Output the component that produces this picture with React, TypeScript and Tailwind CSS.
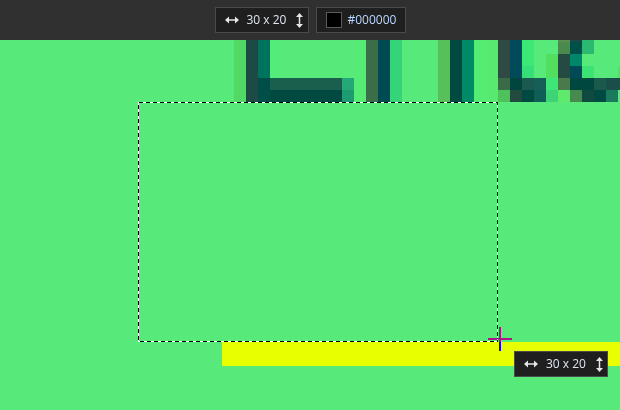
import React from "react";

const G = "#57e97a";

type Col = [number, string[]];
const cols: Col[] = [
  [234, Array(6).fill("#52d964")],
  [246, Array(6).fill("#1e4a46")],
  [258, ["#00735e", "#00735e", "#00735e", "#00735e", "#004e48", "#004e48"]],
  [270, ["#55eb78", "#55eb78", "#55eb78", "#55eb78", "#1a5e4e", "#004a42"]],
  ...[282, 294, 306, 318, 330].map((x) => [x, [G, G, G, G, "#1a5e4e", "#004a42"]] as Col),
  [342, [G, G, G, G, "#25a878", "#1c9c70"]],
  [354, Array(6).fill("#55eb74")],
  [366, Array(6).fill("#3b6e48")],
  [378, Array(6).fill("#004a52")],
  [390, Array(6).fill("#36d478")],
  [438, Array(6).fill("#57c05a")],
  [450, Array(6).fill("#004a42")],
  [462, Array(6).fill("#008a66")],
  [474, Array(6).fill("#55ec74")],
  [486, Array(6).fill("#58ea70")],
  [498, ["#2f4a42", "#2f4a42", "#2f4a42", "#2f4a42", "#3a6a46", "#4fc15a"]],
  [510, ["#004a5a", "#004a5a", "#004a5a", "#004a5a", "#00463f", "#224a3e"]],
  [522, ["#3be876", "#3be876", "#3be876", "#36de78", "#1a5a50", "#004a42"]],
  [534, [G, G, G, G, "#165e58", "#0e5e57"]],
  [546, [G, G, "#52df60", "#52df60", "#3de676", "#3dd478"]],
  [558, ["#5a9050", "#4a8a4c", "#254a42", "#254a42", "#4a7a4c", "#5eea6c"]],
  [570, ["#1a4a48", "#00504a", "#00876a", "#004a58", "#00483f", "#468a4e"]],
  [582, ["#2bb870", "#2bb870", G, "#3ce374", "#00483f", "#104a40"]],
  [594, [G, G, G, G, "#1a5a4c", "#004a42"]],
  [606, [G, G, G, G, "#1a4e48", "#1a7a5e"]],
  [618, [G, G, G, "#52e066", "#1a4e48", G]],
];

function HArrow() {
  return (
    <svg width="14" height="8" viewBox="0 0 14 8" className="shrink-0">
      <path d="M0 4 L4 0.5 V7.5 Z M14 4 L10 0.5 V7.5 Z" fill="#e6e6e6" />
      <rect x="3" y="3.25" width="8" height="1.5" fill="#e6e6e6" />
    </svg>
  );
}

function VArrow() {
  return (
    <svg width="7" height="15" viewBox="0 0 7 15" className="shrink-0">
      <path d="M3.5 0 L7 4 H0 Z M3.5 15 L7 11 H0 Z" fill="#e6e6e6" />
      <rect x="2.75" y="3" width="1.5" height="9" fill="#e6e6e6" />
    </svg>
  );
}

function SizeBox() {
  return (
    <div className="w-[94px] h-[26px] border border-[#4a4a4a] bg-[#1f1f1f] flex items-center pl-[9px]">
      <HArrow />
      <span className="ml-[8px] text-[12px] leading-none text-[#dfe6f0] whitespace-nowrap">30 x 20</span>
      <span className="ml-[10px]">
        <VArrow />
      </span>
    </div>
  );
}

export default function App() {
  return (
    <div className="w-[620px] h-[410px] flex flex-col overflow-hidden font-['Open_Sans',sans-serif]">
      <div className="h-10 shrink-0 bg-[#303030] flex items-center justify-center gap-[7px]">
        <SizeBox />
        <div className="w-[90px] h-[26px] border border-[#4a4a4a] bg-[#1f1f1f] flex items-center pl-[9px]">
          <div className="w-4 h-4 bg-black border border-[#5a5a5a] shrink-0" />
          <span className="ml-[6px] text-[12px] leading-none text-[#bcd6ff]">#000000</span>
        </div>
      </div>
      <div className="relative flex-1 bg-[#57e97a] overflow-hidden">
        <svg className="absolute inset-0" width="620" height="370" shapeRendering="crispEdges">
          {cols.map(([x, cs]) =>
            cs.map((c, i) =>
              c === G ? null : (
                <rect key={`${x}-${i}`} x={x} y={-10 + i * 12} width={12} height={12} fill={c} />
              )
            )
          )}
          <rect x="222" y="302" width="398" height="24" fill="#e8ff00" />
          <rect x="138.5" y="62.5" width="359" height="239" fill="none" stroke="#ffffff" strokeWidth="1" />
          <rect
            x="138.5"
            y="62.5"
            width="359"
            height="239"
            fill="none"
            stroke="#000000"
            strokeWidth="1"
            strokeDasharray="4 3"
          />
        </svg>
        <div className="absolute left-[488px] top-[287px] w-[24px] h-[24px] mix-blend-difference">
          <div className="absolute left-[11px] top-0 w-[2px] h-[24px] bg-white" />
          <div className="absolute left-0 top-[11px] w-[24px] h-[2px] bg-white" />
        </div>
        <div className="absolute left-[514px] top-[311px]">
          <SizeBox />
        </div>
      </div>
    </div>
  );
}
